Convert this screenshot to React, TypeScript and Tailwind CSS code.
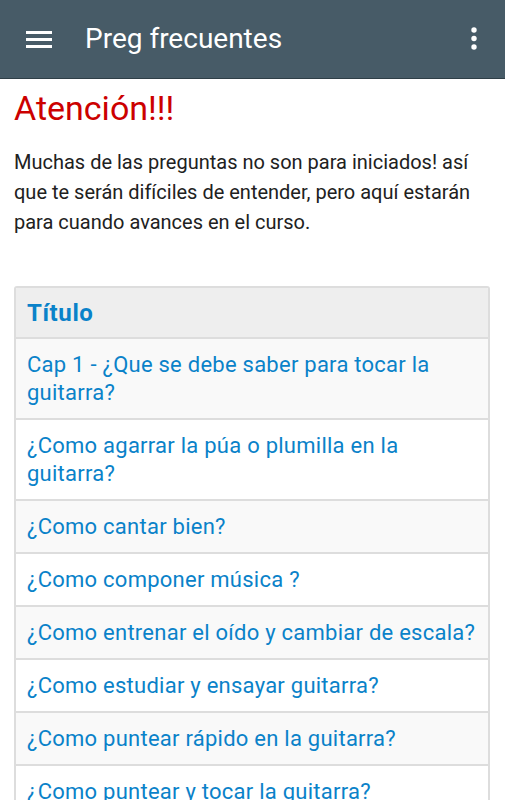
const questions = [
  'Cap 1 - ¿Que se debe saber para tocar la guitarra?',
  '¿Como agarrar la púa o plumilla en la guitarra?',
  '¿Como cantar bien?',
  '¿Como componer música ?',
  '¿Como entrenar el oído y cambiar de escala?',
  '¿Como estudiar y ensayar guitarra?',
  '¿Como puntear rápido en la guitarra?',
  '¿Como puntear y tocar la guitarra?',
  '¿Como tocar acordes con cejilla?',
];

const App = () => {
  return (
    <div className="h-[800px] overflow-hidden bg-white font-['Roboto',sans-serif]">
      <header className="flex h-[79px] items-center border-b border-[#2f3f47] bg-[#475b67]">
        <svg width="26" height="17" viewBox="0 0 26 17" className="ml-[26px]">
          <rect x="0" y="0" width="26" height="3" fill="white" />
          <rect x="0" y="7" width="26" height="3" fill="white" />
          <rect x="0" y="14" width="26" height="3" fill="white" />
        </svg>
        <h1 className="ml-[33px] flex-1 text-[28px] text-white">Preg frecuentes</h1>
        <svg width="6" height="24" viewBox="0 0 6 24" className="mr-[28px]">
          <circle cx="3" cy="3" r="2.7" fill="white" />
          <circle cx="3" cy="11.5" r="2.7" fill="white" />
          <circle cx="3" cy="20" r="2.7" fill="white" />
        </svg>
      </header>

      <main className="px-[14px]">
        <h2 className="mt-[9px] text-[34px] leading-[40px] text-[#cc0000]">Atención!!!</h2>
        <p className="mt-[19px] text-[20px] leading-[30px] text-[#212121]">
          Muchas de las preguntas no son para iniciados! así que te serán difíciles de entender, pero aquí estarán
          para cuando avances en el curso.
        </p>

        <div className="mt-[49px] w-[476px] overflow-hidden rounded-[3px] border-2 border-[#dddddd]">
          <div className="flex h-[49px] items-center bg-[#eeeeee] px-[11px] text-[24px] font-bold tracking-[0.6px] text-[#0a82c9]">
            Título
          </div>
          {questions.map((q, i) => (
            <div
              key={q}
              className={`border-t-2 border-[#dddddd] px-[11px] py-[11.5px] text-[22px] leading-[28px] tracking-[0.25px] text-[#0a82c9] ${
                i % 2 === 0 ? 'bg-[#f9f9f9]' : 'bg-white'
              }`}
            >
              {q}
            </div>
          ))}
        </div>
      </main>
    </div>
  );
};

export default App;
